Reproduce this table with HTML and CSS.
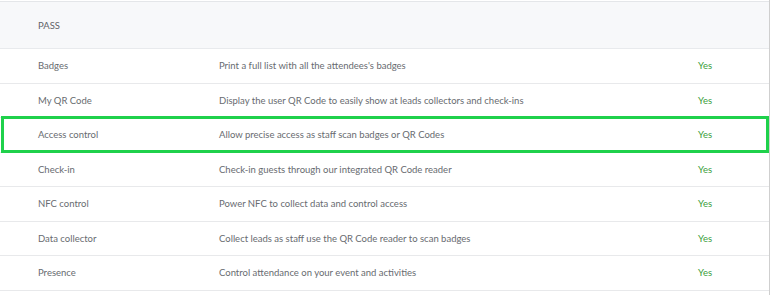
FILE: index.html
```html
<!DOCTYPE html>
<html>
<head>
<meta charset="utf-8">
<link rel="stylesheet" href="styles.css">
</head>
<body>
<div class="panel">
  <div class="row head">
    <div class="c-name">PASS</div><div class="c-desc"></div><div class="c-val"></div>
  </div>
  <div class="row"><div class="c-name">Badges</div><div class="c-desc">Print a full list with all the attendees's badges</div><div class="c-val yes">Yes</div></div>
  <div class="row"><div class="c-name">My QR Code</div><div class="c-desc">Display the user QR Code to easily show at leads collectors and check-ins</div><div class="c-val yes">Yes</div></div>
  <div class="row highlight"><div class="c-name">Access control</div><div class="c-desc">Allow precise access as staff scan badges or QR Codes</div><div class="c-val yes">Yes</div></div>
  <div class="row"><div class="c-name">Check-in</div><div class="c-desc">Check-in guests through our integrated QR Code reader</div><div class="c-val yes">Yes</div></div>
  <div class="row"><div class="c-name">NFC control</div><div class="c-desc">Power NFC to collect data and control access</div><div class="c-val yes">Yes</div></div>
  <div class="row"><div class="c-name">Data collector</div><div class="c-desc">Collect leads as staff use the QR Code reader to scan badges</div><div class="c-val yes">Yes</div></div>
  <div class="row"><div class="c-name">Presence</div><div class="c-desc">Control attendance on your event and activities</div><div class="c-val yes">Yes</div></div>
</div>
</body>
</html>
```

FILE: styles.css
```css
html, body {
  margin: 0;
  padding: 0;
  background: #ffffff;
}
body {
  font-family: Lato, "Open Sans", sans-serif;
  font-size: 9.5px;
  color: #686b70;
}
.panel {
  width: 769px;
  height: 294px;
  padding-top: 1px;
  border-right: 1px solid #cfcfcf;
  overflow: hidden;
}
.row {
  display: grid;
  grid-template-columns: 219px 479px 1fr;
  align-items: center;
  height: 34.5px;
  box-sizing: border-box;
  border-bottom: 1px solid #e8e9eb;
}
.row.head {
  height: 48px;
  background: #f7f8fa;
  border-top: 1px solid #e4e6e9;
  border-bottom: 1px solid #e8eaed;
  color: #5f6368;
}
.c-name {
  padding-left: 38px;
}
.yes {
  color: #3a9e3a;
}
.highlight {
  position: relative;
}
.highlight::after {
  content: "";
  position: absolute;
  left: 1px;
  right: 0;
  top: -2px;
  bottom: -1px;
  border: 3px solid #1fd14b;
  pointer-events: none;
}
```
